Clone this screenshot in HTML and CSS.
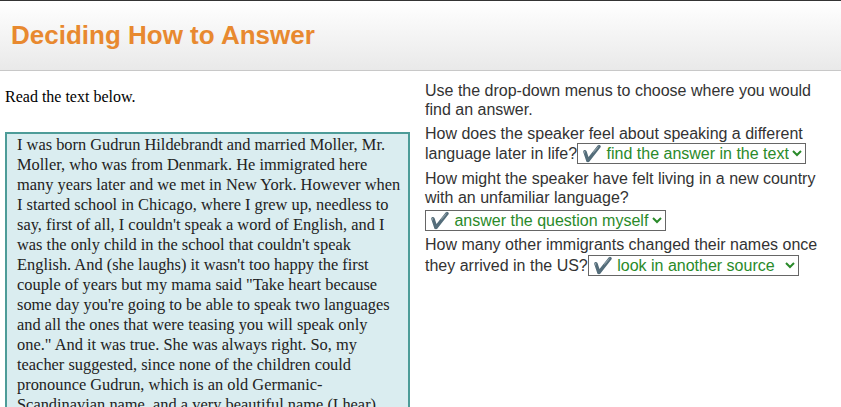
FILE: index.html
```html
<!DOCTYPE html>
<html>
<head>
<meta charset="utf-8">
<link rel="stylesheet" href="styles.css">
</head>
<body>
<header class="top">
  <h1 class="title">Deciding How to Answer</h1>
</header>
<main class="content">
  <section class="left">
    <p class="intro">Read the text below.</p>
    <div class="passage">I was born Gudrun Hildebrandt and married Moller, Mr.<br>
Moller, who was from Denmark. He immigrated here<br>
many years later and we met in New York. However when<br>
I started school in Chicago, where I grew up, needless to<br>
say, first of all, I couldn't speak a word of English, and I<br>
was the only child in the school that couldn't speak<br>
English. And (she laughs) it wasn't too happy the first<br>
couple of years but my mama said "Take heart because<br>
some day you're going to be able to speak two languages<br>
and all the ones that were teasing you will speak only<br>
one." And it was true. She was always right. So, my<br>
teacher suggested, since none of the children could<br>
pronounce Gudrun, which is an old Germanic-<br>
Scandinavian name, and a very beautiful name (I hear),<br>
they called me Gertrude.</div>
  </section>
  <section class="right">
    <p class="q">Use the drop-down menus to choose where you would find an answer.</p>
    <p class="q">How does the speaker feel about speaking a different language later in life?<select class="sel"><option>✔️ find the answer in the text</option></select></p>
    <p class="q q-own">How might the speaker have felt living in a new country with an unfamiliar language? <select class="sel"><option>✔️ answer the question myself</option></select></p>
    <p class="q q-last">How many other immigrants changed their names once they arrived in the US?<select class="sel sel-c"><option>✔️ look in another source</option></select></p>
  </section>
</main>
</body>
</html>
```
FILE: styles.css
```css
html, body {
  margin: 0;
  padding: 0;
  background: #fff;
}
body {
  border-top: 1px solid #333;
}
.top {
  height: 69px;
  background: linear-gradient(#ffffff, #e9e9e9);
  border-bottom: 1px solid #c8c8c8;
  display: flex;
  align-items: center;
  padding-left: 11px;
}
.title {
  margin: 0;
  font-family: "Liberation Sans", Arial, sans-serif;
  font-weight: bold;
  font-size: 26px;
  color: #e8892f;
}
.content {
  display: flex;
  gap: 15px;
  padding: 10px 0 0 5px;
}
.left {
  width: 405px;
  flex: none;
}
.intro {
  margin: 6px 0 0 0;
  font-family: "Liberation Serif", "Times New Roman", serif;
  font-size: 16px;
  line-height: 20px;
  color: #000;
}
.passage {
  margin-top: 25px;
  border: 2px solid #4d9c98;
  background: #daedf0;
  padding: 1px 8px 0 10px;
  font-family: "Liberation Serif", "Times New Roman", serif;
  font-size: 16.4px;
  line-height: 20px;
  color: #222;
  white-space: nowrap;
  overflow: hidden;
}
.right {
  flex: 1;
  padding-right: 20px;
  font-family: "Liberation Sans", Arial, sans-serif;
  font-size: 16px;
  line-height: 19px;
  color: #333;
}
.q {
  margin: 0 0 5px 0;
}
.q-own {
  margin-bottom: 3px;
}
.q-own .sel {
  margin-top: 3px;
}
.q-last {
  line-height: 21px;
}
.sel {
  font-family: "Liberation Sans", Arial, sans-serif;
  font-size: 16px;
  color: #2a8a2a;
  background: #fff;
  border: 1px solid #666;
  border-radius: 0;
  height: 21px;
  padding: 0;
  margin: 0;
  vertical-align: baseline;
}
.sel-c {
  width: 211px;
}
```
